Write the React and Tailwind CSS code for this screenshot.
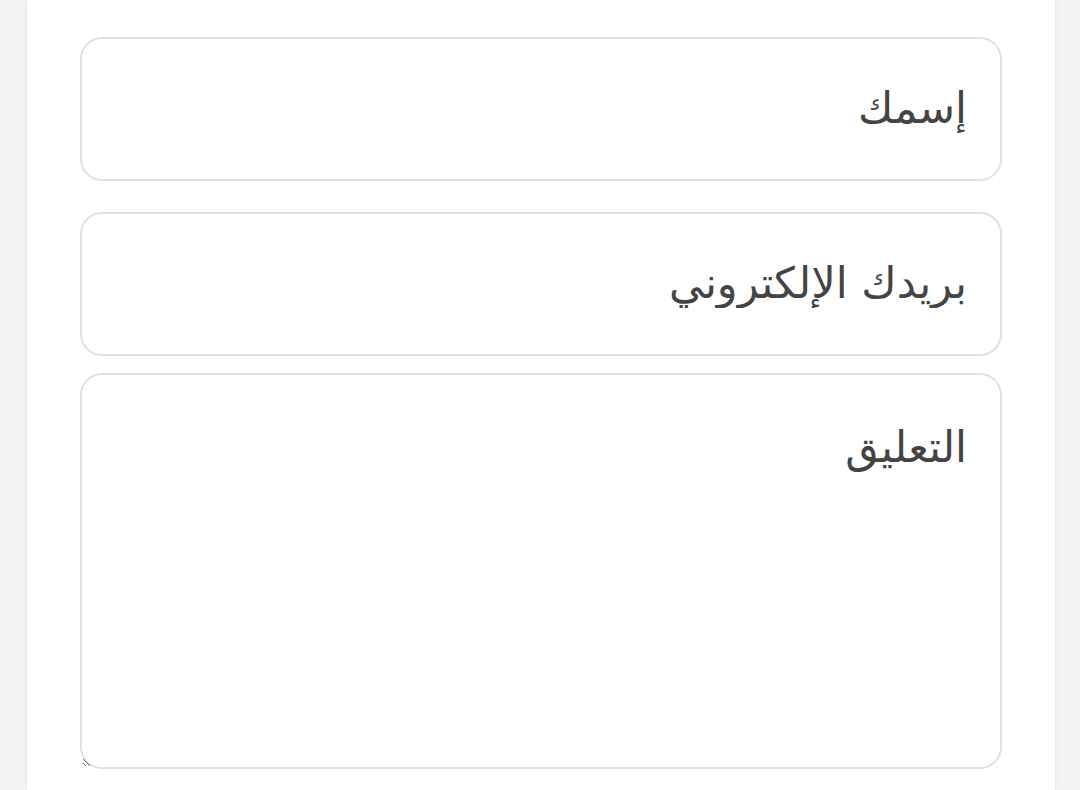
import React from "react";

export default function App() {
  const field =
    "w-full rounded-[22px] border-2 border-[#e0e0e0] bg-white pl-[35px] pr-[33px] text-right text-[43px] text-[#444] placeholder:text-[#444] outline-none";

  return (
    <div
      dir="rtl"
      className="min-h-[790px] bg-[#f4f4f4] pr-[25px] pl-[27px]"
      style={{ fontFamily: '"DejaVu Sans", "Noto Sans", sans-serif' }}
    >
      <div className="min-h-[790px] bg-white px-[53px] pt-[37px] shadow-[0_0_4px_rgba(0,0,0,0.08)]">
        <form className="flex flex-col">
          <input type="text" placeholder="إسمك" className={`${field} h-[144px] pb-[2px]`} />
          <input
            type="email"
            placeholder="بريدك الإلكتروني"
            className={`${field} mt-[31px] h-[144px] pb-[2px]`}
          />
          <textarea
            placeholder="التعليق"
            className={`${field} mt-[17px] h-[396px] pt-[40px]`}
          />
        </form>
      </div>
    </div>
  );
}
